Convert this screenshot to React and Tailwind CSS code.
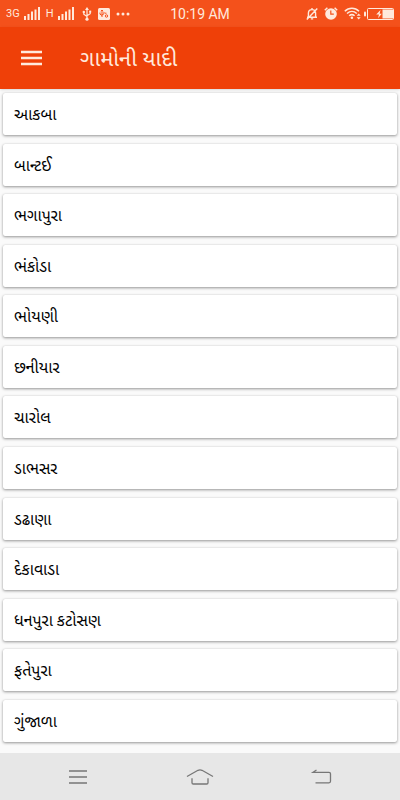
import React from "react";

const villages = [
  "આકબા",
  "બાન્ટઈ",
  "ભગાપુરા",
  "ભંકોડા",
  "ભોયણી",
  "છનીયાર",
  "ચારોલ",
  "ડાભસર",
  "ડઢાણા",
  "દેકાવાડા",
  "ધનપુરા કટોસણ",
  "ફતેપુરા",
  "ગુંજાળા",
];

function Signal() {
  return (
    <svg width="16" height="13" viewBox="0 0 16 13" fill="currentColor" aria-hidden="true">
      <rect x="0" y="9" width="2" height="4" />
      <rect x="3.5" y="7" width="2" height="6" />
      <rect x="7" y="4.5" width="2" height="8.5" />
      <rect x="10.5" y="2.5" width="2" height="10.5" />
      <rect x="14" y="0" width="2" height="13" />
    </svg>
  );
}

function Usb() {
  return (
    <svg width="10" height="14" viewBox="0 0 10 14" fill="none" stroke="currentColor" strokeWidth="1.2" aria-hidden="true">
      <path d="M5 2v10M1.8 5v2.2L5 9.6M8.2 4.5v2.2L5 8.8" />
      <path d="M5 0l2 3H3z" fill="currentColor" stroke="none" />
      <circle cx="5" cy="12.2" r="1.6" fill="currentColor" stroke="none" />
      <circle cx="1.8" cy="5" r="1.2" fill="currentColor" stroke="none" />
      <rect x="7.2" y="3.6" width="2" height="2" fill="currentColor" stroke="none" />
    </svg>
  );
}

function UsbBadge() {
  return (
    <svg width="12" height="12" viewBox="0 0 12 12" aria-hidden="true">
      <rect width="12" height="12" rx="1.5" fill="currentColor" />
      <g fill="none" stroke="#f4511b" strokeWidth="1">
        <path d="M4 2v7M2 4.5v1.7L4 7.5M6 4v1.7L4 7M2.8 3.2L4 2l1.2 1.2" />
        <circle cx="8.5" cy="8" r="1.2" />
        <path d="M7 5.2h1.5" />
      </g>
    </svg>
  );
}

function MutedBell() {
  return (
    <svg width="12" height="12" viewBox="0 0 12 12" fill="none" stroke="currentColor" strokeWidth="1.4" aria-hidden="true">
      <path d="M1 9.2h10M2.4 9V5.3C2.4 3 3.8 1.6 6 1.6S9.6 3 9.6 5.3V9M6 0v1.6M4.8 10.9h2.4M11.3.6L.8 11.4" />
    </svg>
  );
}

function Alarm() {
  return (
    <svg width="14" height="13" viewBox="0 0 14 13" aria-hidden="true">
      <circle cx="7" cy="7" r="5.8" fill="currentColor" />
      <path d="M.8 3.2L3.4.8M13.2 3.2L10.6.8" stroke="currentColor" strokeWidth="1.5" />
      <path d="M6.8 3.6v3.6h3" fill="none" stroke="#f4511b" strokeWidth="1.2" />
    </svg>
  );
}

function Wifi() {
  return (
    <svg width="18" height="13" viewBox="0 0 18 13" fill="none" stroke="currentColor" strokeWidth="1.5" aria-hidden="true">
      <path d="M.8 4.2C4.8.2 11 .2 15 4.2M3 6.5c3-2.8 6.9-2.8 9.8 0M5.2 8.8c1.7-1.5 3.7-1.5 5.4 0" />
      <circle cx="7.9" cy="10.8" r="1.3" fill="currentColor" stroke="none" />
      <path d="M12.7 8.8h4L14.7 6.6zM12.7 10.2h4l-2 2.3z" fill="currentColor" stroke="none" />
    </svg>
  );
}

function Battery() {
  return (
    <svg width="30" height="12" viewBox="0 0 30 12" aria-hidden="true">
      <rect x="3.5" y=".5" width="26" height="11" rx="1" fill="none" stroke="currentColor" />
      <rect x="0" y="3.5" width="2" height="5" rx="1" fill="currentColor" />
      <path d="M18.5 1.5H29v9H18.5z" fill="currentColor" />
      <path d="M16.5 2l-4.3 4.6h2.8l-1 3.6 3.8-4.4h-2.2z" fill="currentColor" />
    </svg>
  );
}

function StatusBar() {
  return (
    <div className="grid h-[27px] grid-cols-[1fr_auto_1fr] items-center bg-[#f4511b] px-1.5 text-[#ffe9dc]">
      <div className="flex items-center">
        <span className="text-[11px] leading-4">3G</span>
        <span className="ml-1"><Signal /></span>
        <span className="ml-1.5 text-[11px] leading-4">H</span>
        <span className="ml-1"><Signal /></span>
        <span className="ml-2"><Usb /></span>
        <span className="ml-1.5"><UsbBadge /></span>
        <svg className="ml-1.5" width="14" height="4" viewBox="0 0 14 4" fill="currentColor" aria-hidden="true">
          <circle cx="2" cy="2" r="1.5" />
          <circle cx="7" cy="2" r="1.5" />
          <circle cx="12" cy="2" r="1.5" />
        </svg>
      </div>
      <time className="text-sm">10:19 AM</time>
      <div className="flex items-center justify-end gap-1.5">
        <MutedBell />
        <Alarm />
        <div className="flex items-center gap-0.5">
          <Wifi />
          <Battery />
        </div>
      </div>
    </div>
  );
}

function Toolbar() {
  return (
    <header className="flex h-[62px] items-center bg-[#ef4008] pt-px pl-5 text-[#ffe9dc] shadow-sm">
      <button type="button" aria-label="Menu">
        <svg width="22" height="18" viewBox="0 0 22 18" fill="currentColor" aria-hidden="true">
          <path d="M1 .8h21v2.4H1zM1 6.8h21v2.4H1zM1 12.8h21v2.4H1z" />
        </svg>
      </button>
      <h1 className="ml-[38px] text-[22px] leading-8">ગામોની યાદી</h1>
    </header>
  );
}

function NavigationBar() {
  return (
    <nav className="flex h-[47px] items-center justify-between bg-[#e7e7e7] px-[66px] text-[#777777]">
      <button type="button" aria-label="Recent apps">
        <svg width="24" height="16" viewBox="0 0 24 16" fill="none" stroke="currentColor" strokeWidth="1.4" aria-hidden="true">
          <path d="M3 2h18M3 8h18M3 14h18" />
        </svg>
      </button>
      <button type="button" aria-label="Home">
        <svg width="28" height="18" viewBox="0 0 28 18" fill="none" stroke="currentColor" strokeWidth="1.3" aria-hidden="true">
          <path d="M1 8.5l11-6.2q2-1 4 0l11 6.2M6 10.2v4.5q0 1.3 1.3 1.3h13.4q1.3 0 1.3-1.3v-4.5" />
        </svg>
      </button>
      <button type="button" aria-label="Back">
        <svg width="24" height="16" viewBox="0 0 24 16" fill="none" stroke="currentColor" strokeWidth="1.3" aria-hidden="true">
          <path d="M6.5 1L3 3.3h16q1.5 0 1.5 1.5v7.5q0 1.5-1.5 1.5H5.5" />
        </svg>
      </button>
    </nav>
  );
}

export default function App() {
  return (
    <div className="flex min-h-screen flex-col bg-[#fafafa] font-['Roboto','Noto_Sans_Gujarati','Noto_Sans',sans-serif]">
      <StatusBar />
      <Toolbar />
      <main className="flex flex-1 flex-col">
        <ul className="flex flex-1 flex-col justify-between gap-2 px-[3px] pt-1 pb-[11px]">
          {villages.map((name) => (
            <li key={name} className="rounded-xs bg-white shadow-[0_1px_3px_#00000066,0_0_1px_#00000022]">
              <button type="button" className="flex h-[42px] w-full items-center px-[11px] pt-0.5 text-left text-base leading-6 text-black">
                {name}
              </button>
            </li>
          ))}
        </ul>
      </main>
      <NavigationBar />
    </div>
  );
}
